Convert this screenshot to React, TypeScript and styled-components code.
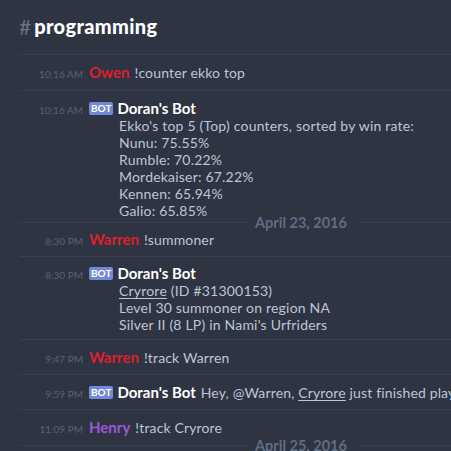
import React from "react";
import styled, { createGlobalStyle } from "styled-components";

const Global = createGlobalStyle`
  html, body { margin: 0; padding: 0; background: #2e3441; }
  body { font-family: Lato, "Noto Sans", sans-serif; overflow: hidden; }
`;

const Page = styled.div`
  width: 451px;
  height: 451px;
  background: #2e3441;
  overflow: hidden;
  display: flex;
  flex-direction: column;
`;

const Header = styled.div`
  flex: none;
  height: 55px;
  margin-left: 19px;
  border-bottom: 1px solid #3a414e;
  display: flex;
  align-items: center;
  gap: 3px;
  box-sizing: border-box;
  padding-bottom: 2px;
`;

const Hash = styled.span`
  color: #6b7486;
  font-size: 21px;
  font-weight: 400;
`;

const Channel = styled.span`
  color: #ffffff;
  font-size: 20px;
  font-weight: 900;
  letter-spacing: 0.35px;
`;

const List = styled.div`
  margin-left: 19px;
  display: flex;
  flex-direction: column;
`;

const Group = styled.div<{ $sep?: boolean; $pt?: number; $pb?: number }>`
  flex: none;
  padding-top: ${(p) => p.$pt ?? 9}px;
  padding-bottom: ${(p) => p.$pb ?? 8}px;
  border-bottom: ${(p) => (p.$sep ? "1px solid #3a414e" : "none")};
  display: flex;
  flex-direction: column;
`;

const Row = styled.div`
  display: flex;
  align-items: baseline;
  height: 17px;
  line-height: 17px;
  white-space: nowrap;
`;

const Time = styled.span`
  width: 64px;
  flex: none;
  text-align: right;
  color: #5b6373;
  font-size: 10px;
  margin-right: 6px;
`;

const Name = styled.span<{ $c: string }>`
  color: ${(p) => p.$c};
  font-size: 15px;
  font-weight: 700;
  margin-right: 5px;
`;

const Bot = styled.span`
  display: inline-flex;
  align-items: center;
  justify-content: center;
  align-self: center;
  background: #7289da;
  color: #fff;
  font-size: 10px;
  font-weight: 700;
  height: 13px;
  padding: 0 2px;
  border-radius: 2px;
  margin-right: 4px;
  line-height: 13px;
`;

const Text = styled.span`
  color: #bcc6d8;
  font-size: 14px;
  letter-spacing: 0.15px;
`;

const Body = styled.div`
  padding-left: 100px;
  color: #bcc6d8;
  font-size: 14px;
  letter-spacing: 0.2px;
  line-height: 17px;
  height: 17px;
  white-space: nowrap;
`;

const Link = styled.span`
  text-decoration: underline;
  text-underline-offset: 2px;
`;

const Divider = styled.div`
  flex: none;
  display: flex;
  align-items: center;
  height: 6px;
`;

const DivLine = styled.div<{ $w?: number }>`
  flex: ${(p) => (p.$w ? `0 0 ${p.$w}px` : "1")};
  height: 1px;
  background: #3a414e;
`;

const DivText = styled.span`
  color: #5f6d84;
  font-size: 14.5px;
  font-weight: 700;
  padding: 0 10px 0 9px;
  white-space: nowrap;
`;

const DateDivider = ({ label }: { label: string }) => (
  <Divider>
    <DivLine $w={227} />
    <DivText>{label}</DivText>
    <DivLine />
  </Divider>
);

const RED = "#de1f2b";
const WHITE = "#ffffff";
const PURPLE = "#9b59d6";

export default function App() {
  return (
    <Page>
      <Global />
      <Header>
        <Hash>#</Hash>
        <Channel>programming</Channel>
      </Header>
      <List>
        <Group $sep $pt={9} $pb={9}>
          <Row>
            <Time>10:16 AM</Time>
            <Name $c={RED}>Owen</Name>
            <Text>!counter ekko top</Text>
          </Row>
        </Group>
        <Group $pt={9} $pb={0}>
          <Row>
            <Time>10:16 AM</Time>
            <Bot>BOT</Bot>
            <Name $c={WHITE}>Doran's Bot</Name>
          </Row>
          <Body>Ekko's top 5 (Top) counters, sorted by win rate:</Body>
          <Body>Nunu: 75.55%</Body>
          <Body>Rumble: 70.22%</Body>
          <Body>Mordekaiser: 67.22%</Body>
          <Body>Kennen: 65.94%</Body>
          <Body>Galio: 65.85%</Body>
        </Group>
        <DateDivider label="April 23, 2016" />
        <Group $sep $pt={6} $pb={8}>
          <Row>
            <Time>8:30 PM</Time>
            <Name $c={RED}>Warren</Name>
            <Text>!summoner</Text>
          </Row>
        </Group>
        <Group $sep $pt={8} $pb={6}>
          <Row>
            <Time>8:30 PM</Time>
            <Bot>BOT</Bot>
            <Name $c={WHITE}>Doran's Bot</Name>
          </Row>
          <Body>
            <Link>Cryrore</Link> (ID #31300153)
          </Body>
          <Body>Level 30 summoner on region NA</Body>
          <Body>Silver II (8 LP) in Nami's Urfriders</Body>
        </Group>
        <Group $sep $pt={9} $pb={8}>
          <Row>
            <Time>9:47 PM</Time>
            <Name $c={RED}>Warren</Name>
            <Text>!track Warren</Text>
          </Row>
        </Group>
        <Group $sep $pt={9} $pb={8}>
          <Row>
            <Time>9:59 PM</Time>
            <Bot>BOT</Bot>
            <Name $c={WHITE}>Doran's Bot</Name>
            <Text>
              Hey, @Warren, <Link>Cryrore</Link> just finished playing
            </Text>
          </Row>
        </Group>
        <Group $pt={9} $pb={6}>
          <Row>
            <Time>11:09 PM</Time>
            <Name $c={PURPLE}>Henry</Name>
            <Text>!track Cryrore</Text>
          </Row>
        </Group>
        <DateDivider label="April 25, 2016" />
      </List>
    </Page>
  );
}
